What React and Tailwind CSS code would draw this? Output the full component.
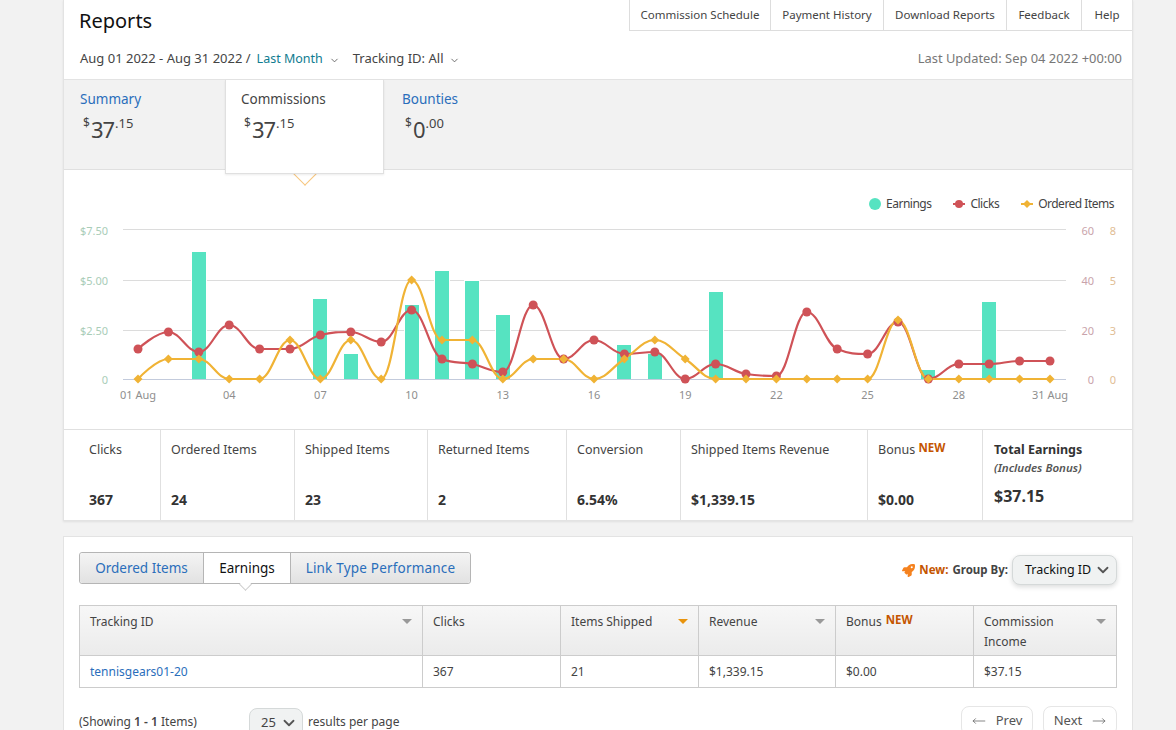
import { ChevronDown, MoveLeft, MoveRight } from "lucide-react";
import { FaRocket } from "react-icons/fa";

const clicks = [349, 332, 352, 325, 349, 349, 335, 332, 342, 310, 359, 364, 372, 305, 359, 340, 354, 352, 379, 364, 374, 376, 312, 349, 354, 322, 379, 364, 364, 361, 361];
const ordered = [379, 359, 359, 379, 379, 340, 379, 340, 379, 280, 340, 340, 379, 359, 359, 379, 359, 340, 359, 379, 379, 379, 379, 379, 379, 320, 379, 379, 379, 379, 379];
const bars = { 3: 252, 7: 299, 8: 354, 10: 305, 11: 271, 12: 281, 13: 315, 17: 345, 18: 354, 20: 292, 27: 370, 29: 302 };

const dayX = (day) => 138 + (day - 1) * 30.4;

// same control point logic the chart library uses for its spline series
function splinePath(ys) {
  const pts = ys.map((y, i) => [dayX(i + 1), y]);
  const s = 1.5;
  const controls = pts.map(([x, y], i) => {
    const last = pts[i - 1];
    const next = pts[i + 1];
    if (!last || !next) return { lx: x, ly: y, rx: x, ry: y };
    const lx = (s * x + last[0]) / (s + 1);
    const rx = (s * x + next[0]) / (s + 1);
    let ly = (s * y + last[1]) / (s + 1);
    let ry = (s * y + next[1]) / (s + 1);
    const fix = ((ry - ly) * (rx - x)) / (rx - lx) + y - ry;
    ly += fix;
    ry += fix;
    if (ly > last[1] && ly > y) {
      ly = Math.max(last[1], y);
      ry = 2 * y - ly;
    } else if (ly < last[1] && ly < y) {
      ly = Math.min(last[1], y);
      ry = 2 * y - ly;
    }
    if (ry > next[1] && ry > y) {
      ry = Math.max(next[1], y);
      ly = 2 * y - ry;
    } else if (ry < next[1] && ry < y) {
      ry = Math.min(next[1], y);
      ly = 2 * y - ry;
    }
    return { lx, ly, rx, ry };
  });
  let d = `M ${pts[0][0]} ${pts[0][1]}`;
  for (let i = 1; i < pts.length; i++) {
    const a = controls[i - 1];
    const b = controls[i];
    d += ` C ${a.rx} ${a.ry} ${b.lx} ${b.ly} ${pts[i][0]} ${pts[i][1]}`;
  }
  return d;
}

const navItems = [
  ["Commission Schedule", "w-[141px]"],
  ["Payment History", "w-[113px]"],
  ["Download Reports", "w-[123px]"],
  ["Feedback", "w-[75px]"],
  ["Help", "w-[50px]"],
];

const stats = [
  ["Clicks", "367", "w-[97px] pl-[25px]"],
  ["Ordered Items", "24", "w-[134px] pl-[10px]"],
  ["Shipped Items", "23", "w-[133px] pl-[10px]"],
  ["Returned Items", "2", "w-[139px] pl-[10px]"],
  ["Conversion", "6.54%", "w-[114px] pl-[10px]"],
  ["Shipped Items Revenue", "$1,339.15", "w-[187px] pl-[10px]"],
];

const columns = [
  { label: "Tracking ID", w: "w-[343px]" },
  { label: "Clicks", w: "w-[138px]", noSort: true },
  { label: "Items Shipped", w: "w-[138px]", active: true },
  { label: "Revenue", w: "w-[137px]" },
  { label: "Bonus", w: "w-[138px]", isNew: true, noSort: true },
  { label: "Commission Income", w: "flex-1", wrap: true },
];

const rowValues = ["tennisgears01-20", "367", "21", "$1,339.15", "$0.00", "$37.15"];

function Money({ whole, cents, className }) {
  return (
    <div className={"flex items-start text-[#444] mt-[5px] " + className}>
      <span className="text-[12px] leading-[16px] mt-[1px] mr-[1px]">$</span>
      <span className="text-[22px] leading-[30px] tracking-[-1px]">{whole}</span>
      <span className="text-[13px] leading-[16px] mt-[1px] ml-[1px]">.{cents}</span>
    </div>
  );
}

function Chart() {
  return (
    <svg width="1068" height="214" viewBox="64 215 1068 214" className="block">
      {[229.5, 280.5, 330.5].map((y) => (
        <line key={y} x1="123" x2="1066" y1={y} y2={y} stroke="#dcdcdc" strokeWidth="1" />
      ))}
      <line x1="123" x2="1066" y1="379.5" y2="379.5" stroke="#c3cbdc" strokeWidth="1" />

      <g fontSize="11" fontFamily="'Noto Sans', sans-serif">
        {[["$7.50", 235], ["$5.00", 285], ["$2.50", 335], ["0", 384]].map(([t, y]) => (
          <text key={t} x="108" y={y} textAnchor="end" fill="#a9cdb8">{t}</text>
        ))}
        {[["60", 235], ["40", 285], ["20", 335], ["0", 384]].map(([t, y]) => (
          <text key={t} x="1094" y={y} textAnchor="end" fill="#c9a3ab">{t}</text>
        ))}
        {[["8", 235], ["5", 285], ["3", 335], ["0", 384]].map(([t, y]) => (
          <text key={t} x="1116" y={y} textAnchor="end" fill="#dfbd94">{t}</text>
        ))}
        {[["01 Aug", 1], ["04", 4], ["07", 7], ["10", 10], ["13", 13], ["16", 16], ["19", 19], ["22", 22], ["25", 25], ["28", 28], ["31 Aug", 31]].map(([t, d]) => (
          <text key={t} x={dayX(d)} y="399" textAnchor="middle" fill="#8e8e8e">{t}</text>
        ))}
      </g>

      {Object.entries(bars).map(([d, top]) => {
        const x = Math.round(dayX(Number(d)) - 7);
        return (
          <g key={d}>
            <rect x={x - 1} y={top - 1} width="16" height={380 - top} fill="#fff" />
            <rect x={x} y={top} width="14" height={379 - top} fill="#56e3c1" />
          </g>
        );
      })}

      <path d={splinePath(clicks)} fill="none" stroke="#cf5257" strokeWidth="2.2" />
      <path d={splinePath(ordered)} fill="none" stroke="#f0b335" strokeWidth="2.2" />

      {clicks.map((y, i) => (
        <circle key={i} cx={dayX(i + 1)} cy={y} r="4.5" fill="#cf5257" />
      ))}
      {ordered.map((y, i) => {
        const x = dayX(i + 1);
        return <polygon key={i} points={`${x},${y - 4.5} ${x + 4.5},${y} ${x},${y + 4.5} ${x - 4.5},${y}`} fill="#f0b335" />;
      })}
    </svg>
  );
}

function SortCaret({ active }) {
  return (
    <span
      className={
        "w-0 h-0 border-l-[5px] border-r-[5px] border-t-[5px] border-l-transparent border-r-transparent mt-[7px] " +
        (active ? "border-t-[#e8930c]" : "border-t-[#999]")
      }
    />
  );
}

export default function App() {
  return (
    <div className="h-[730px] overflow-hidden bg-[#f2f2f2] font-['Noto_Sans',sans-serif] text-[#444]">
      <div className="w-[1070px] ml-[63px] bg-white border-x border-b border-[#e3e3e3] shadow-[0_1px_2px_rgba(0,0,0,0.08)]">
        {/* Header */}
        <div className="h-[80px] border-b border-[#e3e3e3]">
          <div className="flex justify-between h-[31px]">
            <h1 className="pl-[15px] pt-[6px] text-[20px] leading-[30px] text-[#111]">Reports</h1>
            <div className="flex border-b border-l border-[#ddd] h-[31px]">
              {navItems.map(([label, w], i) => (
                <div
                  key={label}
                  className={"flex items-center justify-center text-[11.5px] text-[#444] " + w + (i < navItems.length - 1 ? " border-r border-[#ddd]" : "")}
                >
                  {label}
                </div>
              ))}
            </div>
          </div>
          <div className="flex justify-between items-center h-[20px] mt-[18px] pl-[16px] pr-[10px] text-[13px]">
            <div className="flex items-center">
              <span>Aug 01 2022 - Aug 31 2022 / </span>
              <span className="text-[#0f7c90] text-[12.5px] ml-[6px]">Last Month</span>
              <ChevronDown size={11} strokeWidth={1.8} className="ml-[6px] mt-[2px] text-[#555]" />
              <span className="ml-[13px]">Tracking ID: All</span>
              <ChevronDown size={11} strokeWidth={1.8} className="ml-[6px] mt-[2px] text-[#555]" />
            </div>
            <span className="text-[12.9px] text-[#777]">Last Updated: Sep 04 2022 +00:00</span>
          </div>
        </div>

        {/* Summary tabs */}
        <div className="relative flex h-[90px] bg-[#f2f2f2] border-b border-[#e0e0e0]">
          <div className="w-[161px] pl-[16px] pt-[9px]">
            <div className="text-[13.5px] leading-[20px] text-[#2a6ebb]">Summary</div>
            <Money whole="37" cents="15" className="ml-[3px]" />
          </div>
          <div className="relative z-10 w-[159px] h-[94px] bg-white border-x border-b border-[#e0e0e0] shadow-[0_1px_2px_rgba(0,0,0,0.08)] pl-[15px] pt-[9px]">
            <div className="text-[13.5px] leading-[20px] text-[#444]">Commissions</div>
            <Money whole="37" cents="15" className="ml-[3px]" />
          </div>
          <div className="pl-[18px] pt-[9px]">
            <div className="text-[13.5px] leading-[20px] text-[#2a6ebb]">Bounties</div>
            <Money whole="0" cents="00" className="ml-[3px]" />
          </div>
          <div className="absolute left-[232px] top-[84px] w-[18px] h-[18px] rotate-45 bg-white border-r border-b border-[#f7c67e]" />
        </div>

        {/* Chart */}
        <div className="border-b border-[#e0e0e0]">
          <div className="flex justify-end items-center gap-[22px] h-[45px] pt-[23px] pr-[18px] text-[12px] tracking-[-0.5px] text-[#444]">
            <div className="flex items-center gap-[5px]">
              <span className="w-[12px] h-[12px] rounded-full bg-[#56e3c1]" />
              Earnings
            </div>
            <div className="flex items-center gap-[5px]">
              <svg width="12" height="10" viewBox="0 0 12 10">
                <line x1="0" x2="12" y1="5" y2="5" stroke="#cf5257" strokeWidth="2" />
                <circle cx="6" cy="5" r="4" fill="#cf5257" />
              </svg>
              Clicks
            </div>
            <div className="flex items-center gap-[5px]">
              <svg width="12" height="10" viewBox="0 0 12 10">
                <line x1="0" x2="12" y1="5" y2="5" stroke="#f0b335" strokeWidth="2" />
                <polygon points="6,1 10,5 6,9 2,5" fill="#f0b335" />
              </svg>
              Ordered Items
            </div>
          </div>
          <Chart />
        </div>

        {/* Totals */}
        <div className="flex h-[90px] text-[12.5px]">
          {stats.map(([label, value, cls]) => (
            <div key={label} className={"border-r border-[#e0e0e0] pt-[10px] " + cls}>
              <div className="leading-[20px]">{label}</div>
              <div className="mt-[30px] font-bold text-[14px] leading-[20px] text-[#333]">{value}</div>
            </div>
          ))}
          <div className="w-[115px] pl-[10px] pt-[10px] border-r border-[#e0e0e0]">
            <div className="leading-[20px]">
              Bonus <span className="relative -top-[2px] text-[11.5px] font-bold text-[#c45500]">NEW</span>
            </div>
            <div className="mt-[30px] font-bold text-[14px] leading-[20px] text-[#333]">$0.00</div>
          </div>
          <div className="flex-1 pl-[11px] pt-[10px]">
            <div className="font-bold leading-[20px] text-[#333]">Total Earnings</div>
            <div className="italic font-semibold text-[11.5px] leading-[16px] text-[#555]">(Includes Bonus)</div>
            <div className="mt-[8px] font-bold text-[16px] leading-[24px] text-[#333]">$37.15</div>
          </div>
        </div>
      </div>

      {/* Breakdown card */}
      <div className="w-[1070px] ml-[63px] mt-[15px] h-[300px] bg-white border border-[#e3e3e3] pt-[15px] pl-[15px] pr-[15px]">
        <div className="flex justify-between items-start">
          <div className="relative flex h-[32px] border border-[#b5b5b5] rounded-[3px] text-[13.5px]">
            <div className="w-[123px] flex items-center justify-center bg-gradient-to-b from-[#f4f4f4] to-[#e2e2e2] text-[#2a6ebb] rounded-l-[3px]">Ordered Items</div>
            <div className="w-[88px] flex items-center justify-center bg-white text-[#111] border-x border-[#b5b5b5]">Earnings</div>
            <div className="w-[179px] flex items-center justify-center bg-gradient-to-b from-[#f4f4f4] to-[#e2e2e2] text-[#2a6ebb] tracking-[0.2px] rounded-r-[3px]">Link Type Performance</div>
            <div className="absolute left-[161px] top-[27px] w-[9px] h-[9px] rotate-45 bg-white border-r border-b border-[#ccc]" />
          </div>
          <div className="flex items-center mt-[3px]">
            <FaRocket size={13} className="text-[#f5821f]" />
            <span className="ml-[4px] text-[11.5px] font-bold text-[#c45500]">New:</span>
            <span className="ml-[4px] text-[11.5px] font-bold text-[#444]">Group By:</span>
            <div className="ml-[4px] flex items-center justify-between w-[105px] h-[30px] pl-[12px] pr-[4px] rounded-[8px] border border-[#d5d9d9] bg-[#f0f2f2] shadow-[0_2px_5px_rgba(15,17,17,0.15)] text-[12.5px] text-[#0f1111]">
              Tracking ID
              <ChevronDown size={18} strokeWidth={2.4} className="text-[#555]" />
            </div>
          </div>
        </div>

        {/* Table */}
        <div className="mt-[20px] border border-[#ccc] text-[12px]">
          <div className="flex h-[50px] border-b border-[#ccc] bg-gradient-to-b from-[#f7f7f7] to-[#ebebeb]">
            {columns.map((c, i) => (
              <div
                key={c.label}
                className={"flex justify-between pl-[10px] pr-[10px] pt-[6px] leading-[20px] " + c.w + (i < columns.length - 1 ? " border-r border-[#ccc]" : "")}
              >
                <span className={c.wrap ? "w-[90px]" : ""}>
                  {c.label}
                  {c.isNew && <span className="relative -top-[2px] ml-[4px] text-[11.5px] font-bold text-[#c45500]">NEW</span>}
                </span>
                {!c.noSort && <SortCaret active={c.active} />}
              </div>
            ))}
          </div>
          <div className="flex h-[31px]">
            {columns.map((c, i) => (
              <div
                key={c.label}
                className={"flex items-center pl-[10px] " + c.w + (i < columns.length - 1 ? " border-r border-[#ccc]" : "") + (i === 0 ? " text-[#2a6ebb]" : "")}
              >
                {rowValues[i]}
              </div>
            ))}
          </div>
        </div>

        {/* Pagination */}
        <div className="flex justify-between mt-[20px] text-[12px]">
          <div className="flex items-start">
            <span className="mt-[5px] w-[170px]">
              (Showing <span className="font-semibold">1 - 1</span> Items)
            </span>
            <div className="flex items-center justify-between w-[54px] h-[30px] pl-[11px] pr-[4px] rounded-[8px] border border-[#d5d9d9] bg-[#f0f2f2] text-[13px]">
              25
              <ChevronDown size={18} strokeWidth={2.4} className="text-[#555]" />
            </div>
            <span className="mt-[5px] ml-[5px]">results per page</span>
          </div>
          <div className="flex gap-[10px] text-[13px] -mt-[2px] text-[#555]">
            <div className="flex items-center justify-center gap-[10px] w-[72px] h-[30px] rounded-[8px] border border-[#e6e6e6] bg-white">
              <MoveLeft size={14} strokeWidth={1.2} />
              Prev
            </div>
            <div className="flex items-center justify-center gap-[10px] w-[74px] h-[30px] rounded-[8px] border border-[#e6e6e6] bg-white">
              Next
              <MoveRight size={14} strokeWidth={1.2} />
            </div>
          </div>
        </div>
      </div>
    </div>
  );
}
